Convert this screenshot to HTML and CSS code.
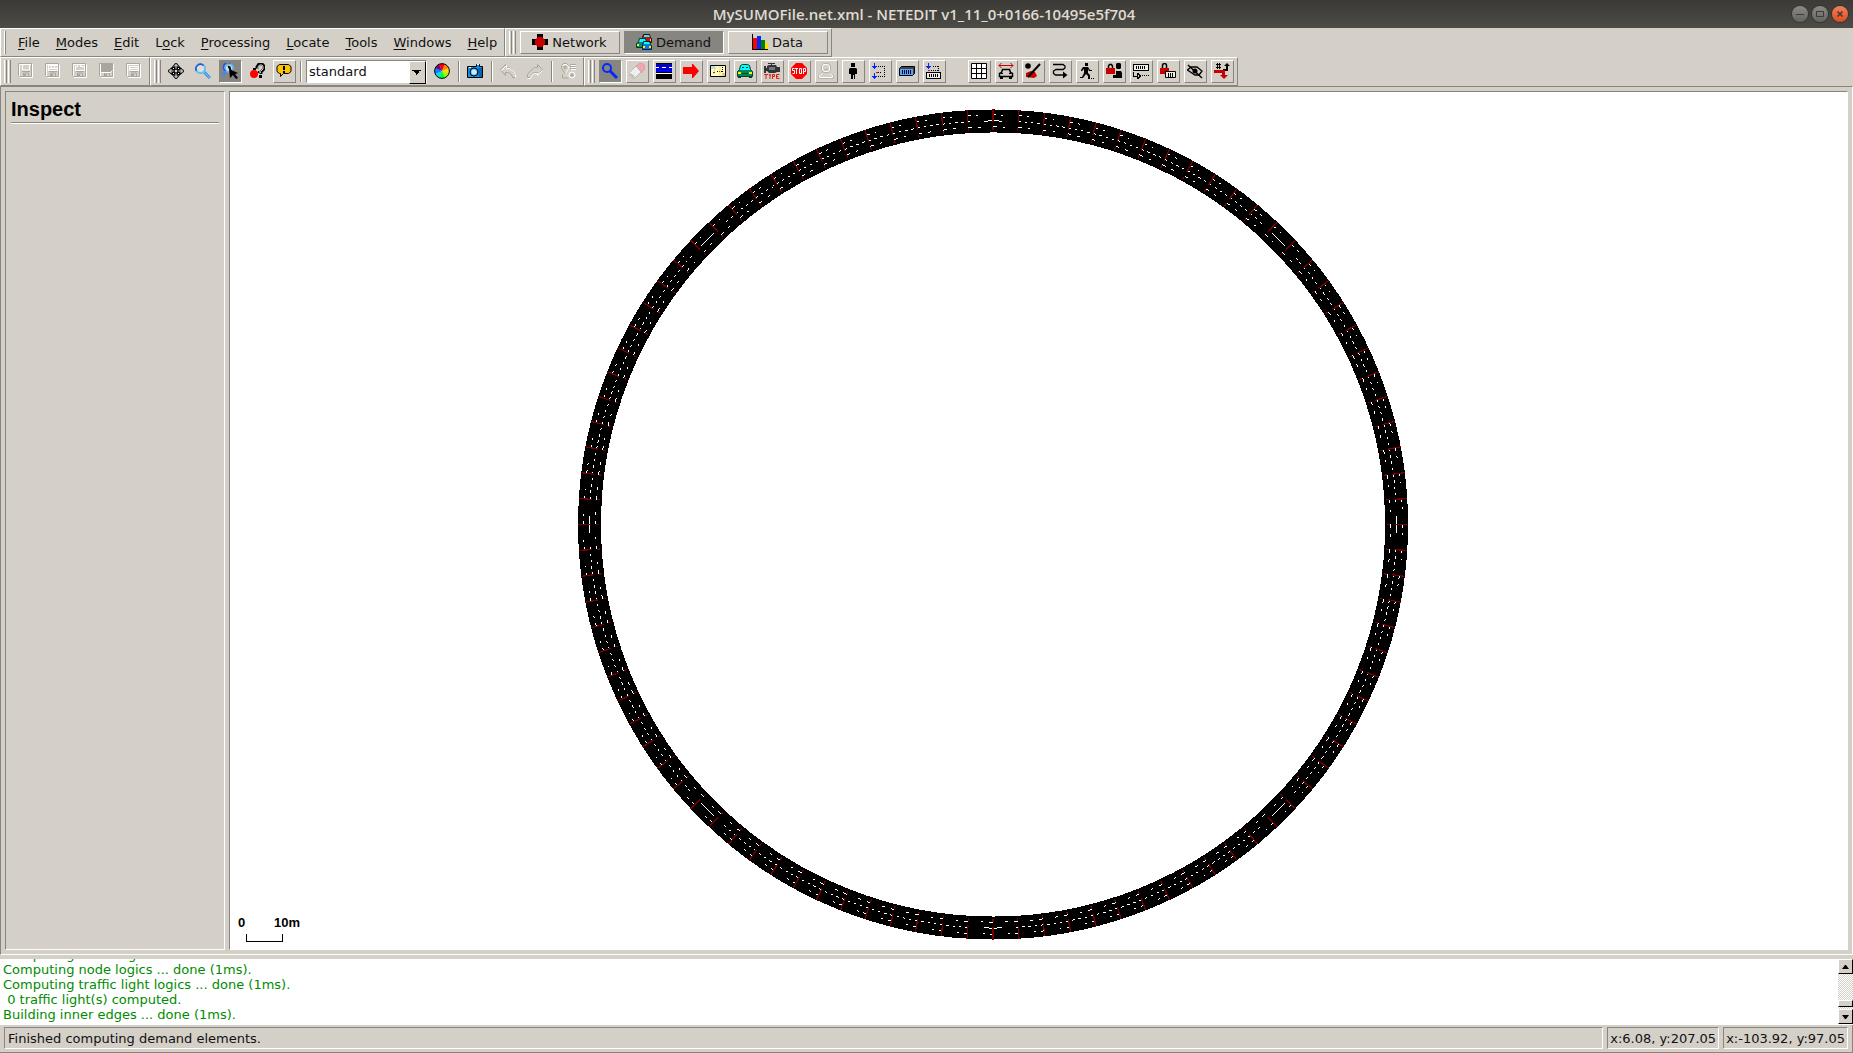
FILE: index.html
```html
<!DOCTYPE html>
<html lang="en">
<head>
<meta charset="utf-8">
<title>MySUMOFile.net.xml - NETEDIT v1_11_0+0166-10495e5f704</title>
<link rel="stylesheet" href="styles.css">
</head>
<body>
<header class="titlebar">
  <span class="titlebar-side"></span>
  <h1 class="titlebar-text">MySUMOFile.net.xml - NETEDIT v1_11_0+0166-10495e5f704</h1>
  <div class="titlebar-side window-buttons">
    <button class="wbtn" aria-label="Minimize"><svg viewBox="0 0 16 16"><path d="M4 8.500h8" stroke="#3c3b37" stroke-width="1"/></svg></button>
    <button class="wbtn" aria-label="Maximize"><svg viewBox="0 0 16 16"><path d="M4.500 5.500h7v5h-7z" fill="none" stroke="#3c3b37"/></svg></button>
    <button class="wbtn wbtn-close" aria-label="Close"><svg viewBox="0 0 16 16"><path d="M5.500 5.500l5 5m0-5l-5 5" stroke="#3c3b37" stroke-width="1.500"/></svg></button>
  </div>
</header>

<div class="bar-row">
  <nav class="toolbar menubar">
    <span class="grip"></span>
    <div class="menus">
      <button><u>F</u>ile</button><button><u>M</u>odes</button><button><u>E</u>dit</button><button>L<u>o</u>ck</button><button><u>P</u>rocessing</button><button><u>L</u>ocate</button><button><u>T</u>ools</button><button><u>W</u>indows</button><button><u>H</u>elp</button>
    </div>
  </nav>
  <div class="toolbar">
    <span class="grip"></span>
    <button class="mode"><svg class="icon" viewBox="0 0 16 16"><path fill="#000" d="M5 0h6v4H5zM5 12h6v4H5zM0 5h4v6H0zM12 5h4v6h-4z"/><path fill="#c80000" d="M6 3h4l3 3v4l-3 3H6l-3-3V6z"/></svg>Network</button>
    <button class="mode pressed"><svg class="icon" viewBox="0 0 16 16"><path fill="#c81010" stroke="#400" d="M6.500 6.500v-3l1-3h6l1 3 1 1v4h-4z"/><path fill="#0ff" d="M8 1h5l1 2H8z"/><path fill="#fe0" d="M14 5h1v2h-1z"/><path fill="#0a9070" stroke="#033" d="M.5 13.500v-4l2-1 1-4h6l1 4v5z"/><path fill="#0ff" d="M4 5h5l1 3H3z"/><path fill="#fe0" d="M1 10h2v2H1z"/><path fill="#0878d8" stroke="#024" d="M6.500 15.500v-5l1-3h6l1 3 1 1v4z"/><path fill="#0ff" d="M8 8h5l1 2H8z"/><path fill="#fe0" d="M7 12h2v2H7zM13 12h2v2h-2z"/></svg>Demand</button>
    <button class="mode"><svg class="icon" viewBox="0 0 16 16"><path fill="#000" d="M0 0h1v15h15v1H0z"/><path fill="#f00" d="M1 4h4v11H1z"/><path fill="#0028ff" d="M5 2h4v13H5z"/><path fill="#008000" d="M9 6h4v9H9z"/><path fill="#fd0" d="M13 9h3v6h-3z"/></svg>Data</button>
  </div>
</div>

<div class="bar-row">
  <div class="toolbar">
    <span class="grip"></span>
    <button class="tool flat" disabled aria-label="New"><svg class="icon" viewBox="0 0 16 16"><use href="#floppy"/><path d="M4.500 2v5h7V2" class="etch"/></svg></button>
    <button class="tool flat" disabled aria-label="Open"><svg class="icon" viewBox="0 0 16 16"><use href="#floppy"/><path d="M3.500 2.500h9v5h-9zM6.500 3v2m3-2v2M4 5.500h8" class="etch"/></svg></button>
    <button class="tool flat" disabled aria-label="Save network"><svg class="icon" viewBox="0 0 16 16"><use href="#floppy"/><path d="M3.500 7.500v-4h2v-2h3v2h4v4z" class="etch"/></svg></button>
    <button class="tool flat" disabled aria-label="Save TLS"><svg class="icon" viewBox="0 0 16 16"><use href="#floppy"/><path fill="#aaa69e" d="M2 1h12v6l-2 2H2z"/><path d="M2.500 9.500h9l2-2" class="etch"/></svg></button>
    <button class="tool flat" disabled aria-label="Save demand"><svg class="icon" viewBox="0 0 16 16"><use href="#floppy"/><path d="M3.500 3.500h9v4h-9zM4 5.500h8" class="etch"/></svg></button>
  </div>
  <div class="toolbar">
    <span class="grip"></span>
    <button class="tool flat" aria-label="Recenter view"><svg class="icon" viewBox="0 0 16 16" fill="none"><path id="arrows" d="M8 1.500v4M6 3.500l2-2 2 2M8 14.500v-4M6 12.500l2 2 2-2M1.500 8h4M3.500 6l-2 2 2 2M14.500 8h-4M12.500 6l2 2-2 2M5 5l1 1m4 4l1 1m0-6l-1 1m-4 4l-1 1" stroke="#000" stroke-width="2.600" stroke-linecap="square"/><path d="M8 1.500v4M6 3.500l2-2 2 2M8 14.500v-4M6 12.500l2 2 2-2M1.500 8h4M3.500 6l-2 2 2 2M14.500 8h-4M12.500 6l2 2-2 2M5 5l1 1m4 4l1 1m0-6l-1 1m-4 4l-1 1" stroke="#fff"/></svg></button>
    <button class="tool flat" aria-label="Edit viewport"><svg class="icon" viewBox="0 0 16 16"><path d="M9 9l6 6" stroke="#3c8cf0" stroke-width="3"/><path d="M9 9l6 6" stroke="#70d0f0" stroke-width="1"/><circle cx="5.500" cy="5.500" r="4.500" fill="#e0ded8" stroke="#60c0f0" stroke-width="2"/><path d="M1.500 8a4.500 4.500 0 0 1 7-5.500" fill="none" stroke="#3450d8" stroke-width="1.500"/></svg></button>
    <button class="tool pressed" aria-label="Zoom style"><svg class="icon" viewBox="0 0 16 16"><path d="M4 9l-4 4" stroke="#3c8cf0" stroke-width="2.500"/><circle cx="7" cy="5" r="4" fill="#e0ded8" stroke="#60b8f0" stroke-width="2"/><path d="M3.500 8a4.500 4.500 0 0 1 5-7.500" fill="none" stroke="#3450d8" stroke-width="1.500"/><path d="M5.500 2.500l3 1 1 4-3-2zM7 6l9 4-3 1 3 4-2 1-3-4-3 3z"/></svg></button>
    <button class="tool flat" aria-label="Help"><svg class="icon" viewBox="0 0 16 16"><path d="M8 5.500V4l2-3h3l2 2v3l-3 3v2" fill="none" stroke="#000" stroke-width="3"/><path d="M9 5V4l1.500-2H13l1 1.500V6l-2.500 2.500V10" fill="none" stroke="#d4d0c8"/><path d="M10 12h3v3h-3z"/><circle cx="5" cy="11" r="4" fill="#f00"/><path fill="#f00" d="M3 9h6v3H3z"/><path fill="#000" d="M4 5h3v2H4zM9 8h1v2H9z"/></svg></button>
    <button class="tool" aria-label="Tips"><svg class="icon" viewBox="0 0 16 16"><path d="M3.500 1.500h9l2.500 2v5l-2.500 2h-5l-3 3v-3h-1L1 8.500v-5z" fill="#fcc400" stroke="#000"/><path d="M7 3h2v4H7zM7 8h2v2H7z"/></svg></button>
    <span class="sep"></span>
    <span class="combo"><select aria-label="View scheme"><option>standard</option></select></span>
    <button class="tool flat" aria-label="Edit colors"><svg class="icon" viewBox="0 0 16 16"><g stroke="none"><path fill="#f00" d="M8 8L5 1h6z"/><path fill="#ff8800" d="M8 8l3-7 4 4z"/><path fill="#fd0" d="M8 8l7-3v6z"/><path fill="#9f0" d="M8 8l7 3-4 4z"/><path fill="#0f3" d="M8 8l3 7H5z"/><path fill="#0de" d="M8 8l-3 7-4-4z"/><path fill="#08f" d="M8 8l-7 3V5z"/><path fill="#708" d="M8 8L1 5l4-4z"/></g><circle cx="8" cy="8" r="7.400" fill="none" stroke="#000"/></svg></button>
    <span class="sep"></span>
    <button class="tool flat" aria-label="Snapshot"><svg class="icon" viewBox="0 0 16 16"><path d="M.5 14.500v-11h9v-2h3v2h3v11z" fill="#1890e8" stroke="#000"/><path d="M11 5h4v9h-3z" fill="#0864b0"/><path d="M2 4h2v1H2zM10 1h2v1h-2z" fill="#fff"/><circle cx="7" cy="9" r="4" fill="#50b8f8" stroke="#000"/><circle cx="7" cy="9" r="2.500" fill="#c8ecff"/></svg></button>
    <span class="sep"></span>
    <button class="tool flat" disabled aria-label="Undo"><svg class="icon" viewBox="0 0 16 16"><path d="M.5 6.500l5-5v3h3l4 3 3 4v3h-3l-1-3-3-2h-3v3z" fill="none" stroke="#aaa69e"/><path d="M1.500 7.500l5-5v3h3l4 3 2 3v3" class="etch"/></svg></button>
    <button class="tool flat" disabled aria-label="Redo"><svg class="icon" viewBox="0 0 16 16"><path d="M15.500 6.500l-5-5v3h-3l-4 3-3 4v3h3l1-3 3-2h3v3z" fill="none" stroke="#aaa69e"/><path d="M15.500 7.500l-5 5v-2h-3l-3 2-1 3h-3" class="etch"/></svg></button>
    <span class="sep"></span>
    <button class="tool flat" disabled aria-label="Compute"><svg class="icon" viewBox="0 0 16 16"><path d="M3.500.5h3l2 2v3l-3.500 5-3.500-5v-3zM4 3.500h2v2H4zM10 1.500h6m-6 2h6m-6 2h6M2.500 11v4h6" fill="none" stroke="#aaa69e"/><path d="M2.500 2.500l2-1h2l2 2v2l-3 5M11 2.500h5m-5 2h5m-5 2h5" class="etch"/><circle cx="12" cy="12" r="3" class="etch"/><circle cx="12" cy="12" r="1.500" fill="#aaa69e"/></svg></button>
  </div>
  <div class="toolbar">
    <span class="grip"></span>
    <button class="tool pressed" aria-label="Inspect"><svg class="icon" viewBox="0 0 16 16"><path d="M8 8l7 7" stroke="#0028ff" stroke-width="3"/><circle cx="5" cy="5" r="4" fill="none" stroke="#0028ff" stroke-width="2"/></svg></button>
    <button class="tool" aria-label="Delete"><svg class="icon" viewBox="0 0 16 16"><path d="M7 3l4-3h2l3 3v3l-4 4z" fill="#f0a8b0" stroke="#c08890" stroke-width=".5"/><path d="M7 3l5 6-6 6H3l-3-3v-2z" fill="#f0eeee" stroke="#a8a8a8" stroke-width=".7"/><path d="M1 11l4 3" stroke="#b8b8b8" stroke-width="2"/></svg></button>
    <button class="tool" aria-label="Route"><svg class="icon" viewBox="0 0 16 16"><path fill="#0000c8" d="M0 0h16v9H0z"/><path d="M0 0h16v1H0zM0 9h16v7H0z"/><path fill="#0000ff" d="M0 7h16v2H0z"/><path fill="#fff" d="M0 4h3v1H0zM6 4h4v1H6zM13 4h3v1h-3zM0 10h16v1H0z"/></svg></button>
    <button class="tool" aria-label="Vehicle"><svg class="icon" viewBox="0 0 16 16"><path fill="#f00" d="M0 4h9V1h1l6 7-6 7H9v-4H0z"/></svg></button>
    <button class="tool" aria-label="Flow map"><svg class="icon" viewBox="0 0 16 16"><path d="M.5 2.500h15v11H.5z" fill="#ffffc0" stroke="#000"/><path fill="#b0dcf8" d="M1 3h4v3H1z"/><path fill="#f0c080" d="M12 10h3v3h-3z"/><path d="M3 9h2v1H3zM7 8h1v1H7zM9 8h1v1H9zM11 8h2v1h-2zM12 6h1v1h-1zM12 4h1v1h-1z"/><path d="M3 11l3-7m4 9V3" stroke="#e8d880" fill="none"/><path fill="#f00" d="M3 9h2v1H3z"/></svg></button>
    <button class="tool" aria-label="Vehicles"><svg class="icon" viewBox="0 0 16 16"><path d="M2.500 6.500l1-4 2-1h5l2 1 1 4 2 2v5h-15v-5z" fill="#008858" stroke="#044030"/><path fill="#0ff" d="M5 2h6l1 1 1 4H3l1-4z"/><path fill="#fe0" d="M1 9h3v2H1zM12 9h3v2h-3z"/><path d="M1 14h3v1H1zM12 14h3v1h-3zM5 10h6v1H5zM5 4h2v1H5zM9 4h2v1H9z" fill="#044030"/></svg></button>
    <button class="tool" aria-label="Vehicle type"><svg class="icon" viewBox="0 0 16 16"><path d="M4 0h7v1H8v1h4l1 2h3v5h-3l-2 1H5L3 8H2v2H0V3h2v2h1V3l2-1h2V1H4z" fill="#303438"/><path d="M5 4h6v3H5z" fill="#777"/><path d="M0 11.500h4M2 11v5M5 11l1 2 1-2M6 13v3M8.500 16v-4.500h2v2h-2M15.500 11.500h-3v4h3m-3-2h2" fill="none" stroke="#d82010"/></svg></button>
    <button class="tool" aria-label="Stop"><svg class="icon" viewBox="0 0 16 16"><path fill="#f00" d="M5 0h6l5 5v6l-5 5H5l-5-5V5z"/><path d="M3.500 5.500H1.500v2h2v3h-2M4 5.500h3M5.500 6v5M8.500 5.500h2v5h-2zM12.500 11V5.500h2v3h-2" stroke="#fff" fill="none"/></svg></button>
    <button class="tool" disabled aria-label="Person type"><svg class="icon" viewBox="0 0 16 16"><path d="M5.500.500h5l2 2v5l-2 2h-5l-2-2v-5zM.5 15.500v-3l4-3m11 6v-3l-4-3M1 15.500h14M6 6.500h4" fill="none" stroke="#b8b4ac"/><path d="M5.500 1.500h4l2 2v4l-2 1h-3l-2-2v-3zM1.500 14.500v-2l3-2m10 4v-2l-3-2M2 14.500h12" class="etch"/></svg></button>
    <button class="tool" aria-label="Person"><svg class="icon" viewBox="0 0 16 16"><path d="M6 0h4v4H6zM5 5h6l1 1v5h-2v5H9v-4H8v4H6v-5H4V6z"/></svg></button>
    <button class="tool" aria-label="Person plan"><svg class="icon" viewBox="0 0 16 16" shape-rendering="crispEdges"><path d="M2 0h1v3h2v1H4v1H3v1H2V5H1V4H0V3h2zM2 10h1v3h2v1H4v1H3v1H2v-1H1v-1H0v-1h2z" fill="#0028ff"/><path d="M6 3.500h7M12.500 3v11M6 13.500h7M6 9.500h4" stroke="#000" stroke-dasharray="1 1" fill="none"/><path d="M4 9h2v1H4z" fill="#f00"/></svg></button>
    <button class="tool" aria-label="Container"><svg class="icon" viewBox="0 0 16 16"><path d="M.5 5.500l2-2h13v7l-2 2H.5z" fill="#444" stroke="#000"/><path d="M1 6h13v6H1z" fill="#50a8f8"/><path d="M3.500 7v4m2-4v4m2-4v4m2-4v4m2-4v4" stroke="#003"/></svg></button>
    <button class="tool" aria-label="Container plan"><svg class="icon" viewBox="0 0 16 16" shape-rendering="crispEdges"><path d="M2 0h1v3h2v1H4v1H3v1H2V5H1V4H0V3h2z" fill="#0028ff"/><path d="M7 3.500h6M12.500 3v5M5 7.500h7" stroke="#000" stroke-dasharray="1 1"/><path fill="#f00" d="M2 7h2v1H2z"/><path d="M.5 9.500h14v6H.5z" fill="#eee" stroke="#000"/><path d="M3.500 11v3m2-3v3m2-3v3m2-3v3m2-3v3" stroke="#000"/></svg></button>
    <span class="space"></span>
    <button class="tool" aria-label="Toggle grid"><svg class="icon" viewBox="0 0 16 16"><path d="M.5.500h15v15H.5zM5.500 0v16m5-16v16M0 5.500h16m-16 5h16" fill="#fff" stroke="#000"/></svg></button>
    <button class="tool" aria-label="Draw spread vehicles"><svg class="icon" viewBox="0 0 16 16"><path d="M1 2.500h14M3.500 0L1 2.500 3.500 5M12.500 0L15 2.500 12.500 5" stroke="#c80000" fill="none"/><path d="M3.500 9.500l1-3h7l1 3 2 1v3h-13v-3z" fill="#d4d0c8" stroke="#000" stroke-width="1.500"/><path d="M2 13h3v3H2zM11 13h3v3h-3zM3 10h2v1H3zM11 10h2v1h-2z"/></svg></button>
    <button class="tool" aria-label="Hide shapes"><svg class="icon" viewBox="0 0 16 16"><circle cx="3" cy="3" r="2.800"/><path d="M1 10l5-2 4 1 2 4-3 2-8-1z" fill="#c80000"/><path d="M15 1L3 14" stroke="#000" stroke-width="2"/></svg></button>
    <button class="tool" aria-label="Show trips"><svg class="icon" viewBox="0 0 16 16"><path d="M1 1.500h10l2 1.500v2l-2 1.500H4L1.500 8v2.500l2 1.500H12" fill="none" stroke="#000" stroke-width="1.300"/><path d="M11 8.500l4.500 3.500-4.500 3.500z"/></svg></button>
    <button class="tool" aria-label="Show all person plans"><svg class="icon" viewBox="0 0 16 16"><path d="M6 0h3v3H6zM4 4h5l2 3h2v1h-3L9 6v4l2 2v4H9v-3L7 11l-3 4H1v-1h2l2-4V6L3 8H2V7z"/><path d="M12 15h1v1h-1zM14 15h1v1h-1z"/></svg></button>
    <button class="tool" aria-label="Lock person"><svg class="icon" viewBox="0 0 16 16"><path d="M2.500 6V3l1-1.500h2l1 1.500v3" fill="none" stroke="#000" stroke-width="1.500"/><path d="M0 5h9v6H0z" fill="#c80000"/><path d="M11 0h3l1 1v4l-1 1h-3l-1-1V1zM10 8h5l1 2v5H7v-3h3z"/></svg></button>
    <button class="tool" aria-label="Show container plans"><svg class="icon" viewBox="0 0 16 16" shape-rendering="crispEdges"><path d="M.5 1.500h15v6H.5z" fill="#eee" stroke="#000"/><path d="M3.500 3v3m2-3v3m2-3v3m2-3v3m2-3v3" stroke="#000"/><path d="M.5 9v4H5M4 10h1v1h1v1h1v1H6v1H5v1H4z" fill="none" stroke="#000"/><path d="M7 12.500h9" stroke="#000" stroke-dasharray="1 1"/></svg></button>
    <button class="tool" aria-label="Lock container"><svg class="icon" viewBox="0 0 16 16"><path d="M2.500 5V2l1-1.500h2l1 1.500v3" fill="none" stroke="#000" stroke-width="1.500"/><path d="M0 5h9v6H0z" fill="#c80000"/><path d="M5.500 8.500h10v6h-10z" fill="#eee" stroke="#000"/><path d="M8.500 10v4m2-4v4m2-4v4" stroke="#000"/></svg></button>
    <button class="tool" aria-label="Hide non-inspected"><svg class="icon" viewBox="0 0 16 16"><path d="M.5 7L4 4h6l5 4-3 4H8z" fill="#d4d0c8" stroke="#000" stroke-width="1.300"/><circle cx="8" cy="8" r="2.500"/><path d="M1 2l14 13" stroke="#000" stroke-width="1.500"/></svg></button>
    <button class="tool" aria-label="Show overlapped routes"><svg class="icon" viewBox="0 0 16 16"><path d="M3.500 0v6M5.500 0v6M2 1.500h5M2 4.500h5" stroke="#000"/><path d="M9 6h3V3h-2l3-3 3 3h-2v5H9z"/><path d="M0 7h11v5h3l-4 4-4-4h2v-2H0z" fill="#c80000"/></svg></button>
  </div>
</div>

<svg class="defs" aria-hidden="true"><defs>
  <g id="floppy"><path d="M1.500 1.500h13v13h-12l-1-1z" fill="none" stroke="#fff"/><path d="M.5 .5h13v13h-12l-1-1zM4 8.500h8M5.500 13v-3h5v3" fill="none" stroke="#aaa69e"/><path d="M6 11h2v3H6z" fill="#aaa69e"/></g>
</defs></svg>

<main class="workspace">
  <aside class="panel">
    <h2>Inspect</h2>
  </aside>
  <section class="view">
    <svg class="network" viewBox="0 0 1618 858" shape-rendering="crispEdges" fill="none">
      <circle cx="763.500" cy="433" r="404" stroke="#000" stroke-width="23"/>
      <g stroke="#fff" stroke-width="1">
        <circle cx="763.500" cy="433" r="410" pathLength="4000" stroke-dasharray="5 8 3 24"/>
        <circle cx="763.500" cy="433" r="404" pathLength="4000" stroke-dasharray="4 6"/>
        <circle cx="763.500" cy="433" r="398" pathLength="4000" stroke-dasharray="6 10 4 20"/>
      </g>
      <circle cx="763.500" cy="433" r="404" stroke="#000" stroke-width="8" pathLength="4000" stroke-dasharray="70 430" stroke-dashoffset="35"/>
      <circle cx="763.500" cy="433" r="404" stroke="#fff" pathLength="4000" stroke-dasharray="28 472" stroke-dashoffset="14"/>
      <g stroke="#780000">
        <circle cx="763.500" cy="433" r="409" stroke-width="13" pathLength="1000" stroke-dasharray=".5 9.500" stroke-dashoffset=".25"/>
        <circle cx="763.500" cy="433" r="396" stroke-width="3" pathLength="1000" stroke-dasharray=".5 9.500" stroke-dashoffset=".25"/>
      </g>
    </svg>
    <div class="scale"><div class="scale-labels"><span>0</span><span>10m</span></div><div class="scale-bar"></div></div>
  </section>
</main>

<section class="messages">
  <div class="log">
    <p>Computing traffic light control information ...</p>
    <p>Computing node logics ... done (1ms).</p>
    <p>Computing traffic light logics ... done (1ms).</p>
    <p> 0 traffic light(s) computed.</p>
    <p>Building inner edges ... done (1ms).</p>
  </div>
  <div class="scrollbar">
    <button aria-label="Scroll up"><svg viewBox="0 0 7 4"><path d="M3 0h1l3 4H0z"/></svg></button>
    <div class="track"><div class="thumb"></div></div>
    <button aria-label="Scroll down"><svg viewBox="0 0 7 4"><path d="M0 0h7L4 4H3z"/></svg></button>
  </div>
</section>

<footer class="statusbar">
  <div class="field field-main">Finished computing demand elements.</div>
  <div class="field">x:6.08, y:207.05</div>
  <div class="field">x:-103.92, y:97.05</div>
</footer>
</body>
</html>
```
FILE: styles.css
```css
:root {
  --base: #d4d0c8;
  --shade: #868580;
  --light: #fff;
}
* { box-sizing: border-box; }
body {
  margin: 0;
  height: 100vh;
  display: flex;
  flex-direction: column;
  overflow: hidden;
  background: var(--base);
  color: #111;
  font: 13px/15px "DejaVu Sans", sans-serif;
}
button, select { font: inherit; color: inherit; border: 0; padding: 0; margin: 0; background: none; border-radius: 0; }
p, h1, h2 { margin: 0; }

/* window title */
.titlebar {
  flex: none;
  height: 28px;
  display: flex;
  align-items: center;
  background: linear-gradient(#3b3a36, #4d4b45);
}
.titlebar-side { flex: 1; }
.titlebar-text { font: 600 15px/28px "Open Sans", sans-serif; color: #dfdbd2; }
.window-buttons { display: flex; justify-content: flex-end; gap: 4px; padding-right: 5px; }
.wbtn {
  width: 16px;
  height: 16px;
  border-radius: 50%;
  background: linear-gradient(#8c8a84, #65635d);
  box-shadow: 0 0 0 1px #35342f;
}
.wbtn svg { display: block; width: 16px; height: 16px; }
.wbtn-close { background: linear-gradient(#f4805c, #de4c1c); }

/* tool bars */
.bar-row { flex: none; display: flex; height: 29px; }
.toolbar {
  display: flex;
  align-items: center;
  gap: 4px;
  padding: 0 3px;
  border: 1px solid;
  border-color: var(--light) var(--shade) var(--shade) var(--light);
}
.grip {
  width: 7px;
  height: 23px;
  border: solid;
  border-width: 0 1px;
  border-color: var(--light) var(--shade);
  border-right-color: var(--shade);
  border-left-color: var(--light);
  background: linear-gradient(90deg, var(--base) 1px, var(--shade) 1px 2px, var(--base) 2px 3px, var(--light) 3px 4px, var(--base) 4px);
}
.menubar { width: 505px; }
.menus { display: flex; }
.menus button { padding: 0 8px; }
.menus u { text-underline-offset: 2px; text-decoration-thickness: 1px; }
.tool, .mode {
  flex: none;
  height: 23px;
  display: flex;
  align-items: center;
  justify-content: center;
  border: 1px solid;
  border-color: var(--light) var(--shade) var(--shade) var(--light);
}
.tool { width: 23px; padding: 0 1px 1px 0; }
.mode { width: 100px; gap: 4px; padding: 0 1px 1px 0; }
.flat { border-color: transparent; }
.pressed { background: var(--shade); border-color: var(--shade) var(--light) var(--light) var(--shade); }
.icon { flex: none; width: 16px; height: 16px; display: block; }
.etch { fill: none; stroke: #fff; stroke-width: 1; }
.defs { position: absolute; width: 0; height: 0; }
.sep { width: 2px; height: 21px; border-left: 1px solid var(--shade); border-right: 1px solid var(--light); }
.space { width: 14px; }
.combo {
  position: relative;
  width: 121px;
  height: 23px;
  border: 1px solid;
  border-color: var(--shade) var(--light) var(--light) var(--shade);
  background: #fff;
}
.combo select { appearance: none; width: 100%; height: 21px; padding-left: 2px; padding-bottom: 1px; }
.combo::after {
  content: "";
  position: absolute;
  top: 0;
  right: 0;
  width: 15px;
  height: 21px;
  pointer-events: none;
  border: 1px solid;
  border-color: var(--light) #000 #000 var(--light);
  background: conic-gradient(from -45deg at 50% 100%, #000 90deg, transparent 0) center 7px / 9px 5px no-repeat var(--base);
  transform: rotate(0);
}
.combo::after { background: linear-gradient(45deg, transparent 50%, #000 50%) 2px 8px / 5px 5px no-repeat, linear-gradient(-45deg, transparent 50%, #000 50%) 6px 8px / 5px 5px no-repeat, var(--base); }

/* side panel and network view */
.workspace {
  flex: 1;
  min-height: 0;
  display: flex;
  gap: 4px;
  padding: 4px;
  border: 1px solid;
  border-color: var(--shade) var(--light) var(--light) var(--shade);
}
.panel {
  width: 220px;
  padding: 5px;
  border: 1px solid;
  border-color: var(--shade) var(--light) var(--light) var(--shade);
}
.panel h2 {
  font: bold 20px/24px "Liberation Sans", sans-serif;
  color: #000;
  padding-bottom: 1px;
  border-bottom: 1px solid var(--shade);
  box-shadow: 0 1px var(--light);
}
.view {
  position: relative;
  flex: 1;
  background: #fff;
  border: 1px solid;
  border-color: var(--shade) #fff #fff var(--shade);
}
.network { display: block; width: 100%; height: 100%; }
.scale { position: absolute; left: 8px; bottom: 7px; font: bold 13px/14px "Liberation Sans", sans-serif; color: #000; }
.scale-labels { display: flex; justify-content: space-between; width: 62px; }
.scale-bar { width: 37px; height: 8px; margin: 4px 0 0 8px; border: 1px solid #000; border-top: 0; }

/* message log */
.messages { flex: none; display: flex; height: 66px; margin-top: 4px; background: #fff; }
.log { flex: 1; display: flex; flex-direction: column; justify-content: flex-end; padding: 0 3px 3px; overflow: hidden; color: #008c00; white-space: pre; }
.scrollbar { width: 15px; display: flex; flex-direction: column; padding-bottom: 1px; }
.scrollbar button, .thumb {
  background: var(--base);
  border: 1px solid;
  border-color: var(--light) #000 #000 var(--light);
}
.scrollbar button { flex: none; height: 15px; display: flex; align-items: center; justify-content: center; }
.scrollbar svg { width: 7px; height: 4px; }
.track {
  flex: 1;
  display: flex;
  flex-direction: column;
  justify-content: flex-end;
  padding-bottom: 2px;
  background: repeating-conic-gradient(var(--base) 0 25%, #fff 0 50%) 0 0 / 2px 2px;
}
.thumb { height: 7px; }

/* status line */
.statusbar { flex: none; height: 28px; display: flex; gap: 4px; padding: 2px 4px 3px; border-bottom: 1px solid var(--shade); border-right: 1px solid var(--shade); }
.field { padding: 0 2px; line-height: 21px; border: 1px solid; border-color: var(--shade) var(--light) var(--light) var(--shade); }
.field-main { flex: 1; padding: 0 3px; }
```
